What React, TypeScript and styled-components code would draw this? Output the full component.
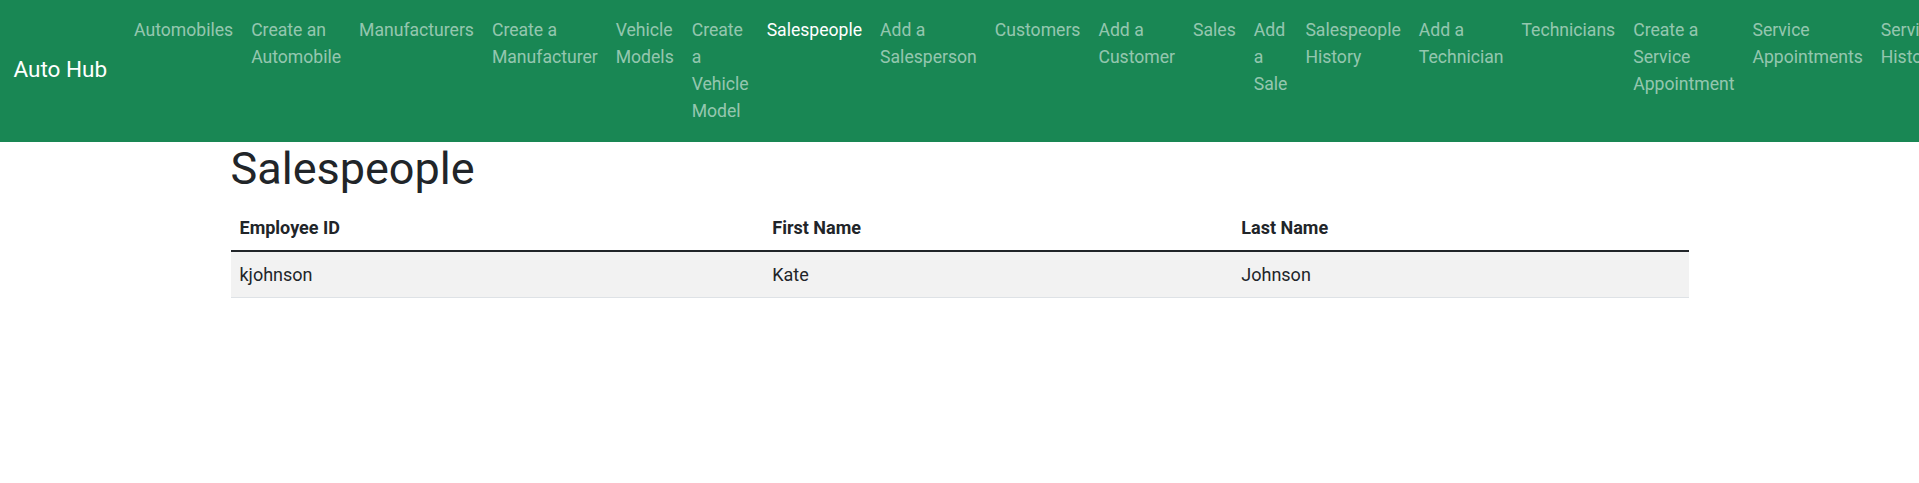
import styled, { createGlobalStyle } from 'styled-components';

interface NavLinkItem {
    label: string;
    active?: boolean;
}

interface Salesperson {
    employeeId: string;
    firstName: string;
    lastName: string;
}

const links: NavLinkItem[] = [
    { label: 'Automobiles' },
    { label: 'Create an Automobile' },
    { label: 'Manufacturers' },
    { label: 'Create a Manufacturer' },
    { label: 'Vehicle Models' },
    { label: 'Create a Vehicle Model' },
    { label: 'Salespeople', active: true },
    { label: 'Add a Salesperson' },
    { label: 'Customers' },
    { label: 'Add a Customer' },
    { label: 'Sales' },
    { label: 'Add a Sale' },
    { label: 'Salespeople History' },
    { label: 'Add a Technician' },
    { label: 'Technicians' },
    { label: 'Create a Service Appointment' },
    { label: 'Service Appointments' },
    { label: 'Service History' },
];

const salespeople: Salesperson[] = [
    { employeeId: 'kjohnson', firstName: 'Kate', lastName: 'Johnson' },
];

const GlobalStyle = createGlobalStyle`
    * { box-sizing: border-box; }
    body {
        margin: 0;
        background: #ffffff;
        color: #212529;
        font-family: Roboto, "Liberation Sans", sans-serif;
        font-size: 18px;
        line-height: 1.5;
        overflow-x: hidden;
    }
`;

const Navbar = styled.nav`
    display: flex;
    align-items: center;
    height: 142px;
    padding: 0 13.5px;
    background: #198754;
    overflow: hidden;
`;

const Brand = styled.a`
    flex-shrink: 0;
    margin-right: 18px;
    margin-bottom: 2px;
    color: #ffffff;
    font-size: 22.5px;
    line-height: 1.5;
    text-decoration: none;
`;

const NavList = styled.ul`
    display: flex;
    align-self: flex-start;
    margin: 0;
    padding: 0;
    list-style: none;
`;

const NavItem = styled.li`
    min-width: min-content;
`;

const NavLink = styled.a<{ $active?: boolean }>`
    display: block;
    padding: 8px 9px;
    margin-top: 9px;
    color: ${(p) => (p.$active ? '#ffffff' : 'rgba(255, 255, 255, 0.55)')};
    font-size: 17.6px;
    line-height: 27px;
    text-decoration: none;
`;

const Container = styled.main`
    max-width: 1485px;
    margin: 0 auto;
    padding: 0 13.5px;
`;

const Title = styled.h1`
    margin: 0 0 9px;
    font-size: 45px;
    font-weight: 400;
    line-height: 1.2;
`;

const Table = styled.table`
    width: 100%;
    border-collapse: collapse;
    table-layout: fixed;
`;

const HeadCell = styled.th<{ $width: string }>`
    width: ${(p) => p.$width};
    padding: 9px;
    text-align: left;
    font-weight: 700;
    border-bottom: 2px solid #212529;
`;

const Row = styled.tr<{ $striped?: boolean }>`
    background: ${(p) => (p.$striped ? '#f2f2f2' : '#ffffff')};
    border-bottom: 1px solid #dee2e6;
`;

const Cell = styled.td`
    padding: 9px;
    height: 45px;
`;

export default function App() {
    return (
        <>
            <GlobalStyle />
            <Navbar>
                <Brand href="#">Auto Hub</Brand>
                <NavList>
                    {links.map((link) => (
                        <NavItem key={link.label}>
                            <NavLink href="#" $active={link.active}>
                                {link.label}
                            </NavLink>
                        </NavItem>
                    ))}
                </NavList>
            </Navbar>
            <Container>
                <Title>Salespeople</Title>
                <Table>
                    <thead>
                        <tr>
                            <HeadCell $width="36.54%">Employee ID</HeadCell>
                            <HeadCell $width="32.17%">First Name</HeadCell>
                            <HeadCell $width="31.29%">Last Name</HeadCell>
                        </tr>
                    </thead>
                    <tbody>
                        {salespeople.map((person, index) => (
                            <Row key={person.employeeId} $striped={index % 2 === 0}>
                                <Cell>{person.employeeId}</Cell>
                                <Cell>{person.firstName}</Cell>
                                <Cell>{person.lastName}</Cell>
                            </Row>
                        ))}
                    </tbody>
                </Table>
            </Container>
        </>
    );
}
